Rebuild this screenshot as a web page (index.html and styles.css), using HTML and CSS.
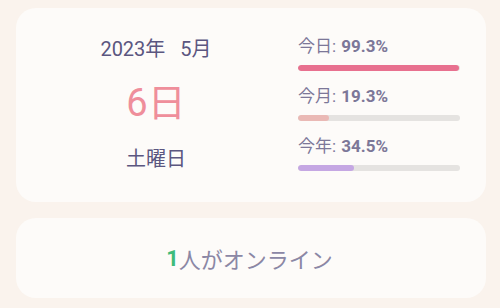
FILE: index.html
```html
<!DOCTYPE html>
<html lang="ja">
<head>
<meta charset="utf-8">
<link rel="stylesheet" href="styles.css">
</head>
<body>
<div class="page">
  <section class="card date-card">
    <div class="date-col">
      <div class="ym"><span>2023年</span><span class="month">5月</span></div>
      <div class="day">6日</div>
      <div class="weekday">土曜日</div>
    </div>
    <div class="progress-col">
      <div class="row">
        <div class="label">今日: <b>99.3%</b></div>
        <div class="track"><div class="fill fill-day" style="width:99.3%"></div></div>
      </div>
      <div class="row">
        <div class="label">今月: <b>19.3%</b></div>
        <div class="track"><div class="fill fill-month" style="width:19.3%"></div></div>
      </div>
      <div class="row">
        <div class="label">今年: <b>34.5%</b></div>
        <div class="track"><div class="fill fill-year" style="width:34.5%"></div></div>
      </div>
    </div>
  </section>
  <section class="card online-card">
    <span class="count">1</span>人がオンライン
  </section>
</div>
</body>
</html>
```
FILE: styles.css
```css
html, body {
  margin: 0;
  padding: 0;
  background: #faf3ed;
}
body {
  width: 500px;
  height: 308px;
  overflow: hidden;
  font-family: Roboto, "Noto Sans CJK JP", sans-serif;
}
.page {
  padding: 8px 14px 10px 16px;
  display: flex;
  flex-direction: column;
  gap: 16px;
}
.card {
  background: #fdfbf9;
  border-radius: 20px;
}
.date-card {
  height: 194px;
  box-sizing: border-box;
  display: grid;
  grid-template-columns: 1fr 162px;
  column-gap: 2px;
  padding: 28px 26px 31px 0;
}
.date-col {
  display: flex;
  flex-direction: column;
  align-items: center;
  justify-content: center;
  color: #5b5680;
}
.ym {
  font-size: 20px;
  line-height: 24px;
}
.ym .month {
  margin-left: 15px;
}
.day {
  font-size: 38px;
  line-height: 46px;
  color: #ef8e9b;
  margin-top: 19px;
}
.weekday {
  font-size: 20px;
  line-height: 24px;
  margin-top: 21px;
}
.progress-col {
  display: flex;
  flex-direction: column;
  gap: 15px;
}
.label {
  font-size: 17px;
  line-height: 20px;
  color: #7c7798;
}
.label b {
  font-weight: 700;
  margin-left: 1px;
}
.track {
  margin-top: 9px;
  height: 6px;
  border-radius: 3px;
  background: #e5e3e1;
  overflow: hidden;
}
.fill {
  height: 100%;
  border-radius: 3px;
}
.fill-day { background: #e8708f; }
.fill-month { background: #eab9b5; }
.fill-year { background: #c5a7e3; }
.online-card {
  height: 80px;
  display: flex;
  align-items: center;
  justify-content: center;
  font-size: 22px;
  color: #8b87a5;
  padding-right: 3px;
  box-sizing: border-box;
}
.count {
  color: #3fbb7b;
  font-weight: 700;
}
```
